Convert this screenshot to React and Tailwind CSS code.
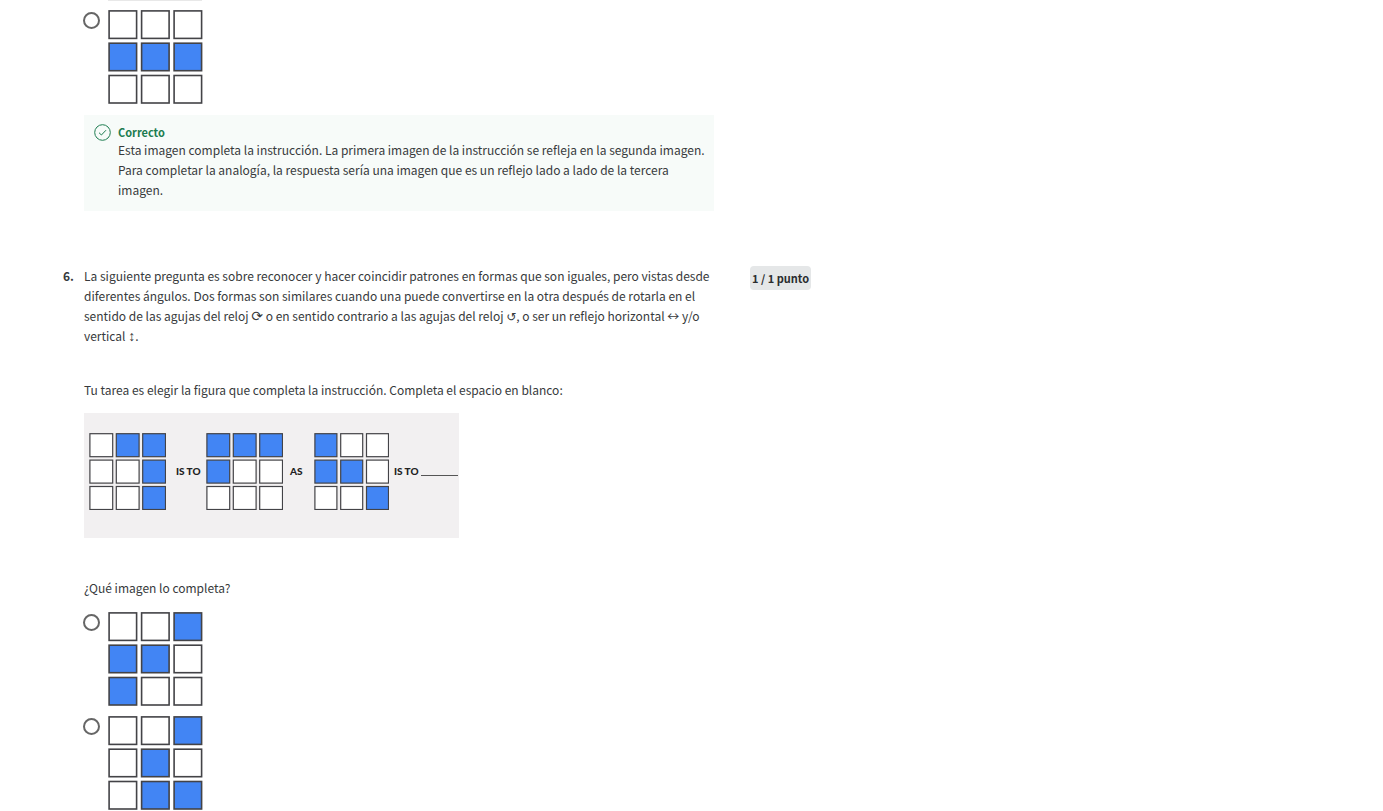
const BLUE = '#4285f4';

function Grid({ pattern, className, cellWidth = 27.5, cellHeight = 27.5, pitchX = 32.5, pitchY = 32.3, stroke = 1.6, label }) {
  const width = Math.ceil(pitchX * 2 + cellWidth + stroke);
  const height = Math.ceil(pitchY * 2 + cellHeight + stroke);
  return (
    <svg className={className} width={width} height={height} viewBox={`0 0 ${width} ${height}`} role="img" aria-label={label}>
      {pattern.split('').map((c, i) => (
        <rect
          key={i}
          x={0.3 + stroke / 2 + (i % 3) * pitchX}
          y={0.1 + stroke / 2 + Math.floor(i / 3) * pitchY}
          width={cellWidth}
          height={cellHeight}
          fill={c === '1' ? BLUE : '#fff'}
          stroke="#434347"
          strokeWidth={stroke}
        />
      ))}
    </svg>
  );
}

function Option({ name, pattern, label }) {
  return (
    <label className="flex items-start gap-2">
      <input
        type="radio"
        name={name}
        aria-label={label}
        className="mt-0.5 -ml-px size-[17px] shrink-0 appearance-none rounded-full border-2 border-[#666] bg-white checked:bg-[#0056d2]"
      />
      <Grid pattern={pattern} label={label} />
    </label>
  );
}

function SmallGrid({ pattern, narrow, label }) {
  return (
    <Grid
      pattern={pattern}
      label={label}
      className="shrink-0"
      cellWidth={narrow ? 22 : 22.8}
      cellHeight={23}
      pitchX={narrow ? 25.8 : 26.4}
      pitchY={26.4}
      stroke={1.2}
    />
  );
}

export default function App() {
  return (
    <main className="pl-[63px] pr-4 font-['Noto_Sans_CJK_SC','Noto_Sans',sans-serif] text-xs leading-5 text-[#373a3c]">
      <section className="max-w-[651px] pl-[21px]">
        <div className="ml-6 h-px w-[94px] bg-[#e8e8e8]" />
        <div className="pt-[9px]">
          <Option name="q5" pattern="000111000" label="Fila central azul" />
        </div>
        <div className="mt-[11px] flex gap-[7px] bg-[#f7fbf9] pt-[9px] pr-2 pb-[11px] pl-[10px]">
          <svg className="size-[17px] shrink-0" viewBox="0 0 17 17" fill="none" stroke="#1d7c50" aria-hidden="true">
            <circle cx="8.5" cy="8.5" r="7.8" />
            <path d="M5 8.7 7.4 11 12 6.2" />
          </svg>
          <div>
            <h2 className="text-[11px] leading-4 font-bold text-[#1d7c50]">Correcto</h2>
            <p>
              Esta imagen completa la instrucción. La primera imagen de la instrucción se refleja en la segunda imagen. Para
              completar la analogía, la respuesta sería una imagen que es un reflejo lado a lado de la tercera imagen.
            </p>
          </div>
        </div>
      </section>

      <section className="mt-[55px] flex items-start">
        <span className="w-[21px] shrink-0 font-bold">6.</span>
        <div className="w-[630px]">
          <p>
            La siguiente pregunta es sobre reconocer y hacer coincidir patrones en formas que son iguales, pero vistas desde
            diferentes ángulos. Dos formas son similares cuando una puede convertirse en la otra después de rotarla en el
            sentido de las agujas del reloj <span className="font-['DejaVu_Sans'] text-sm leading-none">⟳</span> o en sentido
            contrario a las agujas del reloj <span className="font-['DejaVu_Sans'] leading-none">↺</span>, o ser un reflejo
            horizontal ↔ y/o vertical <span className="font-['Liberation_Sans'] text-sm leading-none">↕</span>.
          </p>
          <p className="mt-[34px]">Tu tarea es elegir la figura que completa la instrucción. Completa el espacio en blanco:</p>
          <div className="mt-[13px] flex h-[125px] w-[375px] items-start bg-[#f2f0f1] pt-5 pl-[5px] font-['Lato',sans-serif] text-[10px] font-black text-[#222]">
            <SmallGrid pattern="011001001" label="Primera figura" />
            <span className="w-10 pt-7 pl-[10px]">IS TO</span>
            <SmallGrid pattern="111100000" label="Segunda figura" />
            <span className="w-[31px] pt-7 pl-[7px]">AS</span>
            <SmallGrid pattern="100110001" narrow label="Tercera figura" />
            <span className="pt-7 pl-[5px]">IS TO</span>
            <span className="mt-[42px] ml-[2px] w-[37px] border-b border-[#555]" />
          </div>
          <p className="mt-10">¿Qué imagen lo completa?</p>
          <div className="mt-[14px] flex flex-col gap-[10px]">
            <Option name="q6" pattern="001110100" label="Opción 1" />
            <Option name="q6" pattern="001010011" label="Opción 2" />
          </div>
        </div>
        <div className="ml-9 shrink-0 rounded-sm bg-[#e5e7e8] px-0.5 py-0.5 text-[11px] leading-5 font-bold text-[#2b2d2f]">
          1 / 1 punto
        </div>
      </section>
    </main>
  );
}
